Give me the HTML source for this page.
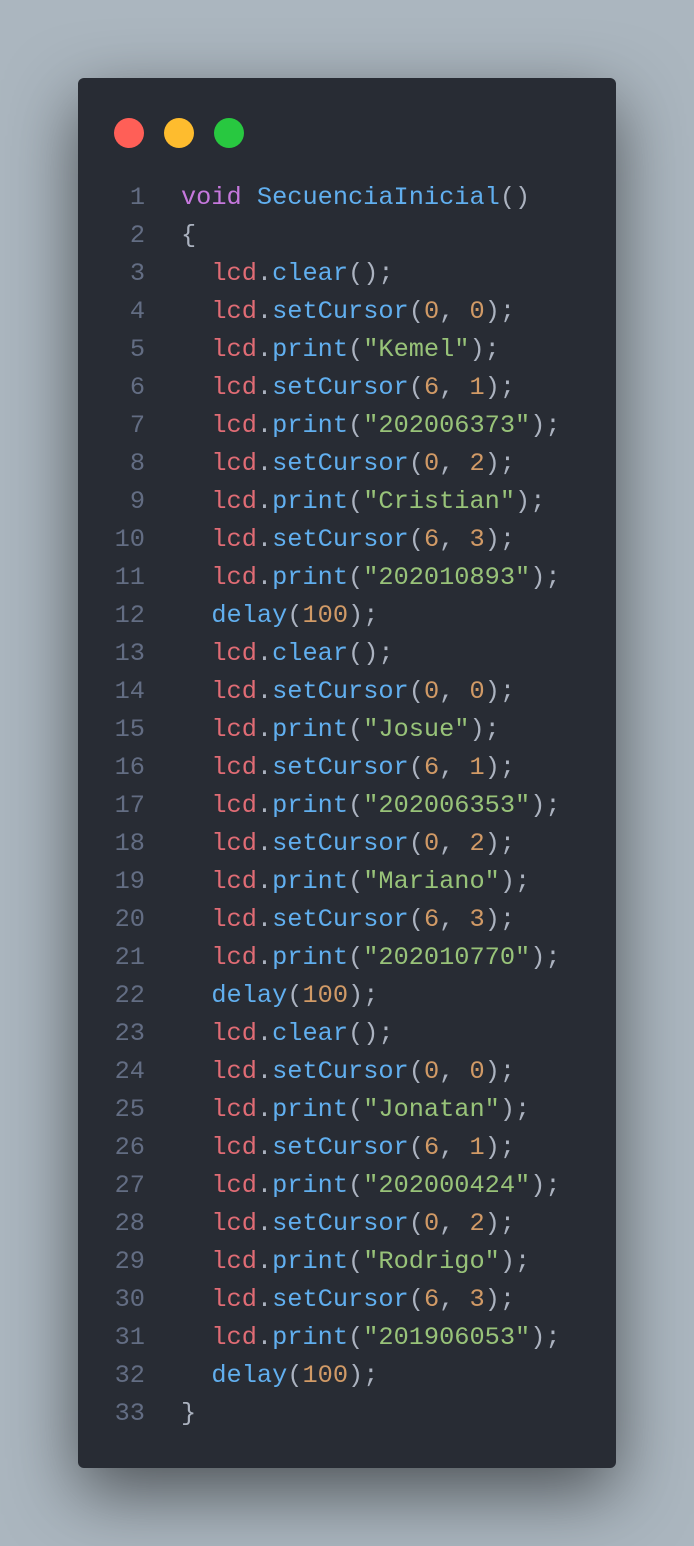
<!DOCTYPE html>
<html><head><meta charset="utf-8"><style>
html,body{margin:0;padding:0}
body{width:694px;height:1546px;background:#abb6bf;position:relative;overflow:hidden}
.win{position:absolute;left:78px;top:78px;width:538px;height:1390px;background:#282c34;border-radius:6px;box-shadow:0 24px 70px rgba(0,0,0,.55)}
.dot{position:absolute;top:40px;width:30px;height:30px;border-radius:50%}
pre{position:absolute;left:0;top:101px;margin:0;font-family:"Liberation Mono",monospace;font-size:25.3px;line-height:38px;color:#abb2bf}
.ln{display:inline-block;width:67px;text-align:right;color:#636d83;margin-right:36px}
.k{color:#c678dd}.f{color:#61afef}.v{color:#e06c75}.s{color:#98c379}.n{color:#d19a66}
</style></head><body>
<div class="win">
<div class="dot" style="left:36px;background:#ff5f57"></div>
<div class="dot" style="left:86px;background:#febc2e"></div>
<div class="dot" style="left:136px;background:#28c840"></div>
<pre><span class="ln">1</span><span class="k">void</span> <span class="f">SecuenciaInicial</span>()
<span class="ln">2</span>{
<span class="ln">3</span>  <span class="v">lcd</span>.<span class="f">clear</span>();
<span class="ln">4</span>  <span class="v">lcd</span>.<span class="f">setCursor</span>(<span class="n">0</span>, <span class="n">0</span>);
<span class="ln">5</span>  <span class="v">lcd</span>.<span class="f">print</span>(<span class="s">"Kemel"</span>);
<span class="ln">6</span>  <span class="v">lcd</span>.<span class="f">setCursor</span>(<span class="n">6</span>, <span class="n">1</span>);
<span class="ln">7</span>  <span class="v">lcd</span>.<span class="f">print</span>(<span class="s">"202006373"</span>);
<span class="ln">8</span>  <span class="v">lcd</span>.<span class="f">setCursor</span>(<span class="n">0</span>, <span class="n">2</span>);
<span class="ln">9</span>  <span class="v">lcd</span>.<span class="f">print</span>(<span class="s">"Cristian"</span>);
<span class="ln">10</span>  <span class="v">lcd</span>.<span class="f">setCursor</span>(<span class="n">6</span>, <span class="n">3</span>);
<span class="ln">11</span>  <span class="v">lcd</span>.<span class="f">print</span>(<span class="s">"202010893"</span>);
<span class="ln">12</span>  <span class="f">delay</span>(<span class="n">100</span>);
<span class="ln">13</span>  <span class="v">lcd</span>.<span class="f">clear</span>();
<span class="ln">14</span>  <span class="v">lcd</span>.<span class="f">setCursor</span>(<span class="n">0</span>, <span class="n">0</span>);
<span class="ln">15</span>  <span class="v">lcd</span>.<span class="f">print</span>(<span class="s">"Josue"</span>);
<span class="ln">16</span>  <span class="v">lcd</span>.<span class="f">setCursor</span>(<span class="n">6</span>, <span class="n">1</span>);
<span class="ln">17</span>  <span class="v">lcd</span>.<span class="f">print</span>(<span class="s">"202006353"</span>);
<span class="ln">18</span>  <span class="v">lcd</span>.<span class="f">setCursor</span>(<span class="n">0</span>, <span class="n">2</span>);
<span class="ln">19</span>  <span class="v">lcd</span>.<span class="f">print</span>(<span class="s">"Mariano"</span>);
<span class="ln">20</span>  <span class="v">lcd</span>.<span class="f">setCursor</span>(<span class="n">6</span>, <span class="n">3</span>);
<span class="ln">21</span>  <span class="v">lcd</span>.<span class="f">print</span>(<span class="s">"202010770"</span>);
<span class="ln">22</span>  <span class="f">delay</span>(<span class="n">100</span>);
<span class="ln">23</span>  <span class="v">lcd</span>.<span class="f">clear</span>();
<span class="ln">24</span>  <span class="v">lcd</span>.<span class="f">setCursor</span>(<span class="n">0</span>, <span class="n">0</span>);
<span class="ln">25</span>  <span class="v">lcd</span>.<span class="f">print</span>(<span class="s">"Jonatan"</span>);
<span class="ln">26</span>  <span class="v">lcd</span>.<span class="f">setCursor</span>(<span class="n">6</span>, <span class="n">1</span>);
<span class="ln">27</span>  <span class="v">lcd</span>.<span class="f">print</span>(<span class="s">"202000424"</span>);
<span class="ln">28</span>  <span class="v">lcd</span>.<span class="f">setCursor</span>(<span class="n">0</span>, <span class="n">2</span>);
<span class="ln">29</span>  <span class="v">lcd</span>.<span class="f">print</span>(<span class="s">"Rodrigo"</span>);
<span class="ln">30</span>  <span class="v">lcd</span>.<span class="f">setCursor</span>(<span class="n">6</span>, <span class="n">3</span>);
<span class="ln">31</span>  <span class="v">lcd</span>.<span class="f">print</span>(<span class="s">"201906053"</span>);
<span class="ln">32</span>  <span class="f">delay</span>(<span class="n">100</span>);
<span class="ln">33</span>}</pre>
</div>
</body></html>
